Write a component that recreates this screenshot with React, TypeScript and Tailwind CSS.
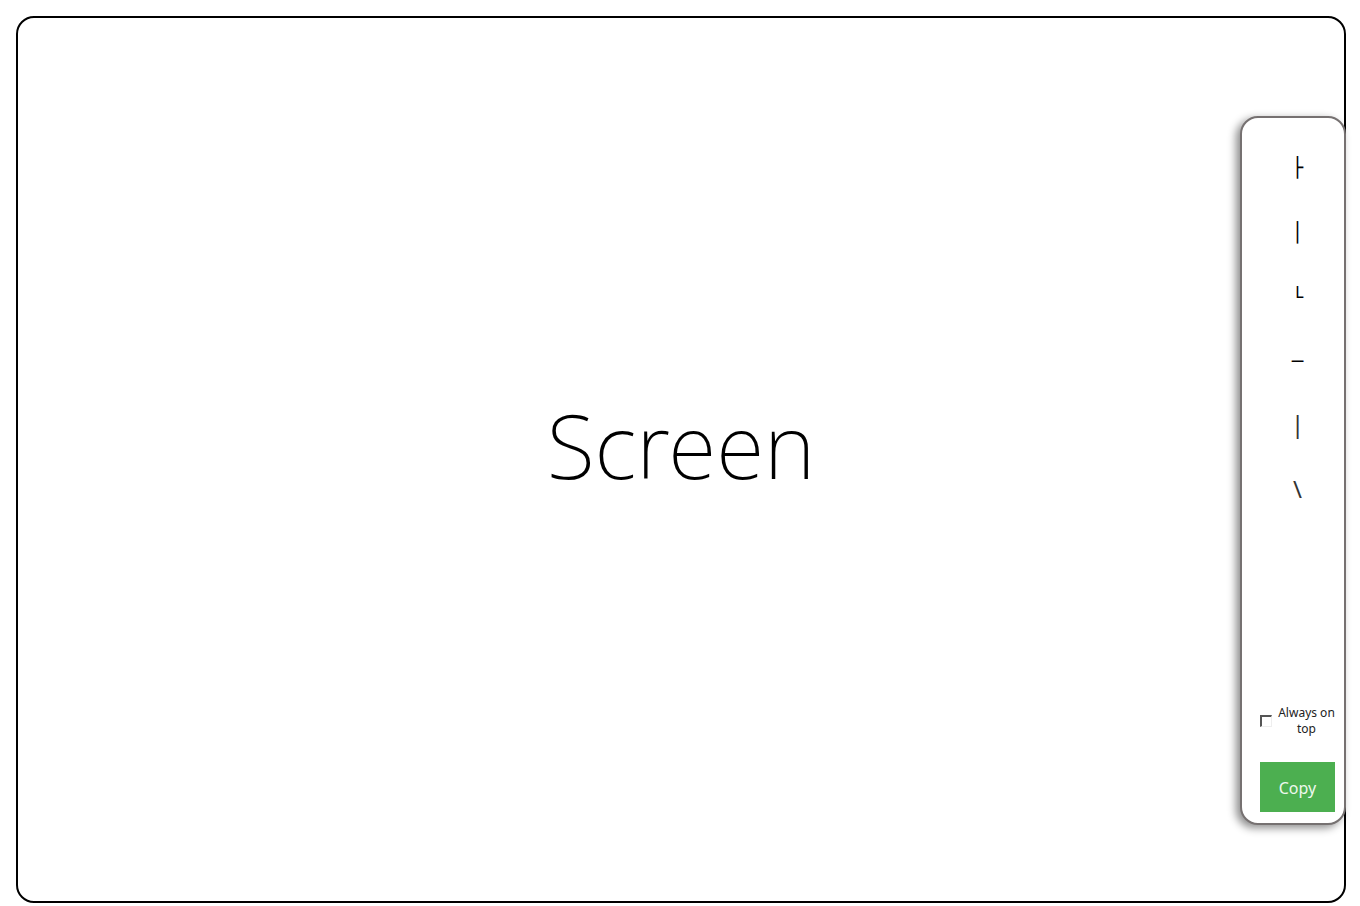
const boxSymbols = ['├', '│', '└', '─'];
const textSymbols = ['|', '\\'];

function SymbolPanel() {
  return (
    <aside
      aria-label="Symbols"
      className="absolute top-[98px] -right-0.5 flex w-[106px] flex-col rounded-[18px] border-2 border-[#767171] bg-white pt-[17px] pr-[9px] pb-[11px] pl-[18px] shadow-[-4px_3px_8px_rgba(0,0,0,0.45)]"
    >
      <div className="grid h-[388px] grid-rows-6">
        {boxSymbols.map((symbol) => (
          <button
            key={symbol}
            type="button"
            className="flex items-center justify-center font-['DejaVu_Sans_Mono',monospace] text-[19px] leading-6 text-black"
          >
            {symbol}
          </button>
        ))}
        {textSymbols.map((symbol) => (
          <button key={symbol} type="button" className="flex items-center justify-center pb-1 text-2xl leading-6 text-[#333]">
            {symbol}
          </button>
        ))}
      </div>
      <label className="mt-[182px] flex items-center gap-1.5 text-xs leading-4 text-[#222]">
        <input
          type="checkbox"
          className="size-3 shrink-0 appearance-none border-t-2 border-r border-b border-l-2 border-t-[#555] border-r-[#eee] border-b-[#eee] border-l-[#555] bg-white checked:bg-[#4caf50]"
        />
        <span className="grow text-center whitespace-nowrap">
          Always on
          <br />
          top
        </span>
      </label>
      <button type="button" className="mt-[25px] h-[50px] bg-[#4caf50] pt-0.5 text-base leading-6 text-[#eef8ee]">
        Copy
      </button>
    </aside>
  );
}

export default function App() {
  return (
    <div className="flex min-h-screen bg-white pt-4 pr-3.5 pb-[3px] pl-4 font-['Noto_Sans',sans-serif]">
      <main className="relative flex grow items-center justify-center rounded-[18px] border-2 border-black bg-white pb-[30px]">
        <h1 className="text-[88px] leading-none font-extralight text-black">Screen</h1>
        <SymbolPanel />
      </main>
    </div>
  );
}
